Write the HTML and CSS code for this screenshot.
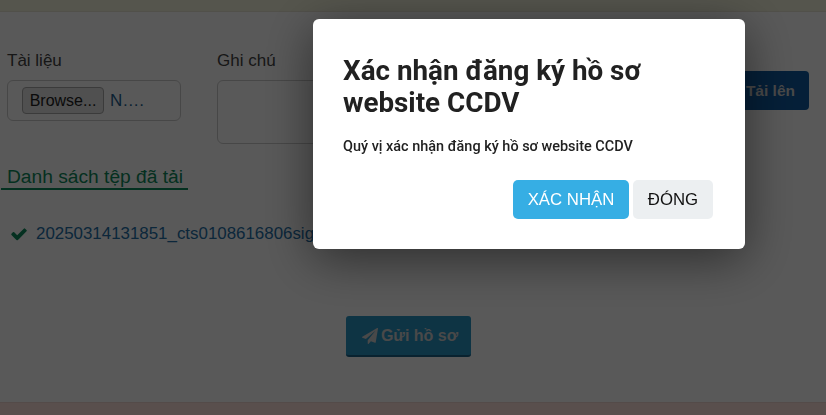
FILE: index.html
```html
<!DOCTYPE html>
<html lang="vi">
<head>
<meta charset="utf-8">
<title>Xác nhận đăng ký hồ sơ</title>
<link rel="stylesheet" href="styles.css">
</head>
<body>
<div class="page">
  <div class="topbar"></div>
  <main class="main">
    <form class="upload-row">
      <div class="field field-file">
        <label class="label">Tài liệu</label>
        <div class="file-box"><span class="browse">Browse...</span><span class="file-name">N….</span></div>
      </div>
      <div class="field field-note">
        <label class="label">Ghi chú</label>
        <div class="note-box"></div>
      </div>
      <button type="button" class="upload-btn">Tải lên</button>
    </form>
    <div class="list-head"><h2 class="list-title">Danh sách tệp đã tải</h2></div>
    <div class="file-row">
      <svg class="check" viewBox="0 0 1792 1792" width="18" height="18"><path d="M1671 566q0 40-28 68l-724 724-136 136q-28 28-68 28t-68-28l-136-136-362-362q-28-28-28-68t28-68l136-136q28-28 68-28t68 28l294 295 656-657q28-28 68-28t68 28l136 136q28 28 28 68z"/></svg>
      <a class="file-link">20250314131851_cts0108616806signed.pdf</a>
    </div>
    <div class="send-wrap">
      <button type="button" class="send-btn">
        <svg class="plane" viewBox="0 0 1792 1792" width="16" height="16"><path d="M1764 11q33 24 27 64l-256 1536q-5 29-32 45-14 8-31 8-11 0-24-5l-453-185-242 295q-18 23-49 23-13 0-22-4-19-7-30.5-23.5t-11.5-36.5v-349l864-1059-1069 925-395-162q-37-14-40-55-2-40 32-59l1664-960q15-9 32-9 19 0 36 11z"/></svg>Gửi hồ sơ
      </button>
    </div>
  </main>
  <div class="footer"></div>
</div>
<div class="overlay">
  <div class="modal">
    <h1 class="modal-title">Xác nhận đăng ký hồ sơ website CCDV</h1>
    <p class="modal-text">Quý vị xác nhận đăng ký hồ sơ website CCDV</p>
    <div class="modal-actions">
      <button type="button" class="btn btn-confirm">XÁC NHẬN</button>
      <button type="button" class="btn btn-close">ĐÓNG</button>
    </div>
  </div>
</div>
</body>
</html>
```
FILE: styles.css
```css
* { box-sizing: border-box; }
html, body { margin: 0; height: 415px; overflow: hidden; }
body { font-family: "Liberation Sans", Arial, sans-serif; background: #fff; color: #333; }
.page { height: 415px; display: flex; flex-direction: column; }
.topbar { height: 12px; background: #f2f2dc; border-bottom: 1px solid #e8e4d4; }
.main { flex: 1; padding: 0 17px 0 7px; display: flex; flex-direction: column; min-height: 0; }
.upload-row { display: flex; margin-top: 40px; align-items: flex-start; }
.field { display: flex; flex-direction: column; }
.field-file { width: 210px; }
.field-note { flex: 1; }
.label { font-size: 17px; line-height: 18px; margin-bottom: 10px; color: #444; }
.file-box { width: 174px; height: 41px; border: 1px solid #ccc; border-radius: 6px; padding: 7px 14px; display: flex; align-items: center; font-size: 16px; white-space: nowrap; }
.browse { height: 27px; line-height: 25px; width: 82px; text-align: center; border: 1px solid #aaa; border-radius: 4px; background: #e4e4e4; color: #222; flex: none; }
.file-name { margin-left: 6px; color: #1f5f90; font-size: 17px; }
.note-box { width: 300px; height: 64px; border: 1px solid #ccc; border-radius: 6px; }
.upload-btn { margin-top: 19px; width: 140px; height: 39px; background: #0f5aa0; color: #d0d0d0; border: 0; border-radius: 4px; font: bold 15.5px "Liberation Sans", sans-serif; text-align: right; padding: 0 14px; }
.list-head { margin-top: 22px; margin-left: -6px; }
.list-title { display: inline-block; margin: 0; padding: 0 5px 0 6px; font-size: 19.2px; font-weight: 400; line-height: 22px; color: #0e8a5c; border-bottom: 2px solid #0e8a5c; }
.file-row { margin-top: 34px; margin-left: 3px; display: flex; align-items: center; white-space: nowrap; font-size: 16.9px; line-height: 20px; min-width: 0; overflow: hidden; }
.check { fill: #0e8a5c; flex: none; margin-right: 8px; }
.file-link { color: #2470a8; }
.send-wrap { margin-top: 72px; display: flex; padding-left: 339px; }
.send-btn { width: 125px; height: 41px; padding: 0 0 0 3px; background: #2a94c4; color: #d0d0d0; border: 0; border-bottom: 2px solid #1a6288; border-radius: 3px; font: bold 16px "Liberation Sans", sans-serif; display: flex; align-items: center; justify-content: center; }
.plane { fill: #d0d0d0; margin-right: 3px; }
.footer { height: 13px; background: #ffe2dc; border-top: 1px solid #f0d8d0; }
.overlay { position: fixed; inset: 0; background: rgba(0,0,0,.65); }
.modal { position: absolute; left: 313px; top: 19px; width: 432px; height: 230px; background: #fff; border-radius: 6px; padding: 36px 30px 30px; box-shadow: 0 10px 50px rgba(0,0,0,.5); font-family: Roboto, sans-serif; display: flex; flex-direction: column; }
.modal-title { margin: 0; font-size: 27.8px; font-weight: 700; line-height: 32px; color: #212121; }
.modal-text { margin: 18px 0 0; font-size: 14.45px; font-weight: 500; line-height: 20px; color: #212121; }
.modal-actions { margin-top: 23px; padding-right: 2px; display: flex; justify-content: flex-end; gap: 4px; }
.btn { height: 39px; border: 0; border-radius: 5px; font: 16.8px "Liberation Sans", sans-serif; padding: 0; }
.btn-confirm { width: 116px; background: #36aee4; color: #fff; }
.btn-close { width: 80px; background: #eceff1; color: #111; }
```
